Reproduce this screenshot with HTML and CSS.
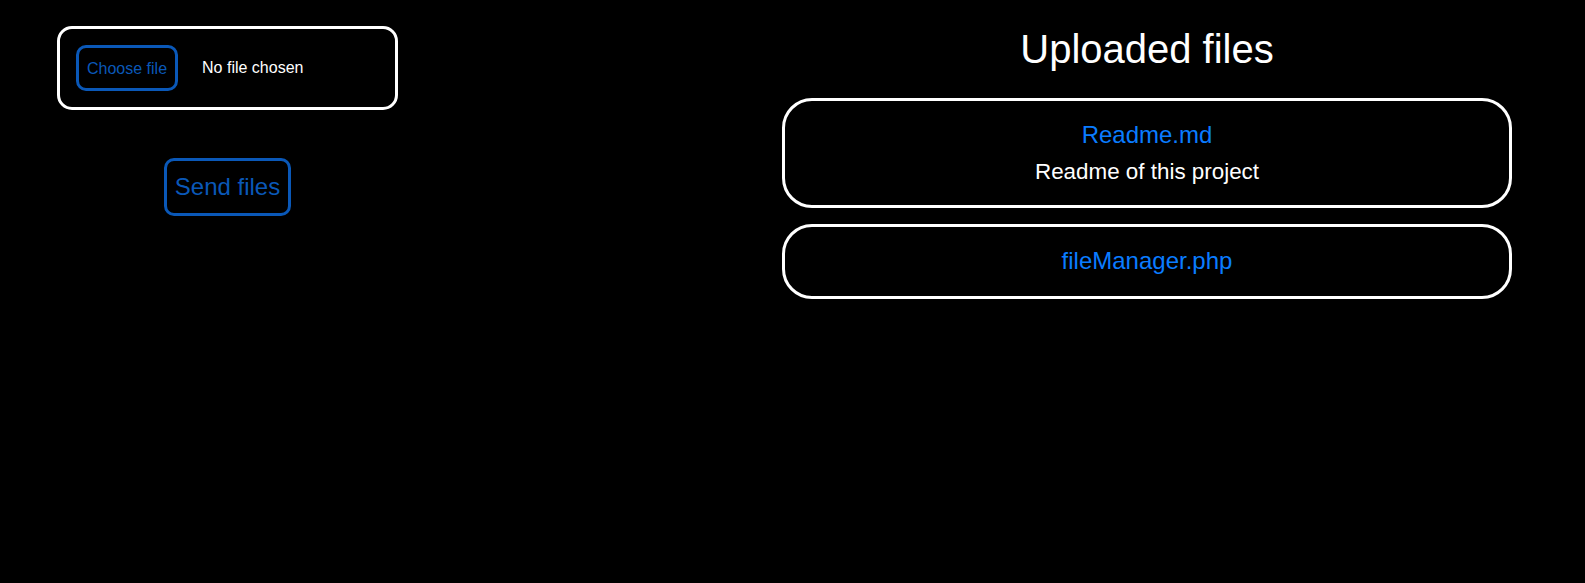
FILE: index.html
```html
<!DOCTYPE html>
<html lang="en">
<head>
<meta charset="utf-8">
<title>File manager</title>
<link rel="stylesheet" href="styles.css">
</head>
<body>
<main class="layout">
  <section class="upload">
    <div class="file-box">
      <span class="choose-btn">Choose file</span>
      <span class="file-status">No file chosen</span>
    </div>
    <div class="send-row">
      <span class="send-btn">Send files</span>
    </div>
  </section>
  <section class="files">
    <h1 class="files-title">Uploaded files</h1>
    <div class="file-card">
      <a class="file-link">Readme.md</a>
      <p class="file-desc">Readme of this project</p>
    </div>
    <div class="file-card">
      <a class="file-link">fileManager.php</a>
    </div>
  </section>
</main>
</body>
</html>
```
FILE: styles.css
```css
html, body {
  margin: 0;
  padding: 0;
  background: #000;
  color: #fff;
  font-family: "Liberation Sans", Arial, sans-serif;
}

.layout {
  display: flex;
  align-items: flex-start;
  padding-left: 57px;
}

.upload {
  width: 341px;
  padding-top: 26px;
}

.file-box {
  box-sizing: border-box;
  width: 341px;
  height: 84px;
  border: 3px solid #fff;
  border-radius: 15px;
  padding: 0 16px;
  display: flex;
  align-items: center;
  gap: 24px;
}

.choose-btn {
  display: inline-block;
  border: 3px solid #0a58b8;
  border-radius: 10px;
  padding: 11px 8px 10px;
  font-size: 16px;
  line-height: 19px;
  color: #0a58b8;
}

.file-status {
  font-size: 16px;
  color: #fff;
}

.send-row {
  display: flex;
  justify-content: center;
  margin-top: 48px;
}

.send-btn {
  display: inline-block;
  border: 3px solid #0a58b8;
  border-radius: 10px;
  padding: 12px 8px;
  font-size: 24px;
  line-height: 28px;
  color: #0a58b8;
}

.files {
  width: 730px;
  margin-left: 384px;
  padding-top: 26px;
}

.files-title {
  margin: 0 0 26px;
  font-size: 40px;
  font-weight: normal;
  text-align: center;
  line-height: 46px;
}

.file-card {
  box-sizing: border-box;
  border: 3px solid #fff;
  border-radius: 30px;
  padding: 20px 20px 21px;
  text-align: center;
  margin-bottom: 16px;
}

.file-link {
  display: block;
  font-size: 24px;
  line-height: 27.6px;
  color: #0a7cff;
  text-decoration: none;
}

.file-desc {
  margin: 10px 0 0;
  font-size: 22.4px;
  line-height: 25.8px;
  color: #fff;
}
```
